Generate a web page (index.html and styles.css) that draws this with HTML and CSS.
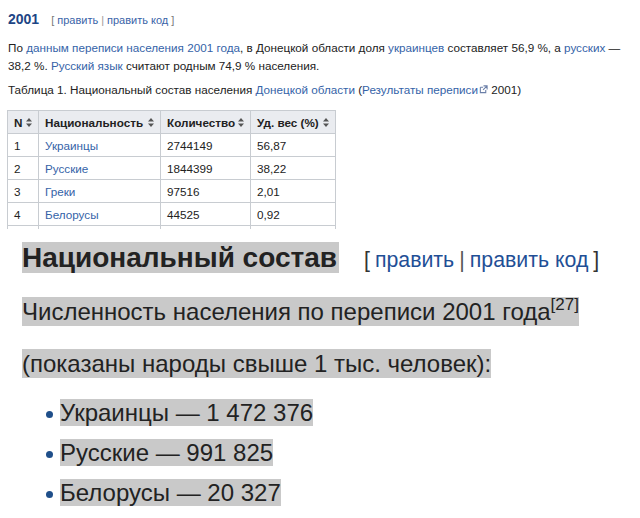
FILE: index.html
```html
<!DOCTYPE html>
<html lang="ru">
<head>
<meta charset="utf-8">
<link rel="stylesheet" href="styles.css">
</head>
<body>
<div class="top">
  <h3 class="year">2001<span class="edit"><span class="br">[</span><a href="#">править</a><span class="sep">|</span><a href="#">править код</a><span class="br">]</span></span></h3>
  <p class="para">По <a href="#">данным переписи населения 2001 года</a>, в Донецкой области доля <a href="#">украинцев</a> составляет 56,9 %, а <a href="#">русских</a> — 38,2 %. <a href="#">Русский язык</a> считают родным 74,9 % населения.</p>
  <p class="caption">Таблица 1. Национальный состав населения <a href="#">Донецкой области</a> (<a href="#">Результаты переписи</a><svg class="ext" width="9" height="9" viewBox="0 0 10 10"><path d="M1.5 2.5h3M1.5 2.5v6h6v-3" fill="none" stroke="#6b7fa8" stroke-width="1.2"/><path d="M5 1h4v4M9 1L4.5 5.5" fill="none" stroke="#6b7fa8" stroke-width="1.2"/></svg> 2001)</p>
  <table class="nat">
    <colgroup>
      <col class="c1"><col class="c2"><col class="c3"><col class="c4">
    </colgroup>
    <thead>
      <tr>
        <th><span class="hd">N<svg class="sort" width="6" height="9" viewBox="0 0 6 9"><path d="M3 0L6 3.5H0z M3 9L0 5.5h6z" fill="#555"/></svg></span></th>
        <th><span class="hd">Национальность<svg class="sort" width="6" height="9" viewBox="0 0 6 9"><path d="M3 0L6 3.5H0z M3 9L0 5.5h6z" fill="#555"/></svg></span></th>
        <th><span class="hd">Количество<svg class="sort" width="6" height="9" viewBox="0 0 6 9"><path d="M3 0L6 3.5H0z M3 9L0 5.5h6z" fill="#555"/></svg></span></th>
        <th><span class="hd">Уд. вес (%)<svg class="sort" width="6" height="9" viewBox="0 0 6 9"><path d="M3 0L6 3.5H0z M3 9L0 5.5h6z" fill="#555"/></svg></span></th>
      </tr>
    </thead>
    <tbody>
      <tr><td>1</td><td><a href="#">Украинцы</a></td><td>2744149</td><td>56,87</td></tr>
      <tr><td>2</td><td><a href="#">Русские</a></td><td>1844399</td><td>38,22</td></tr>
      <tr><td>3</td><td><a href="#">Греки</a></td><td>97516</td><td>2,01</td></tr>
      <tr><td>4</td><td><a href="#">Белорусы</a></td><td>44525</td><td>0,92</td></tr>
      <tr class="stub"><td></td><td></td><td></td><td></td></tr>
    </tbody>
  </table>
</div>
<div class="bottom">
  <h2 class="sec"><span class="hl">Национальный состав</span><span class="edit2"><span class="br2">[</span><a href="#">править</a><span class="sep2">|</span><a href="#">править код</a><span class="br2">]</span></span></h2>
  <p class="line"><span class="hl">Численность населения по переписи 2001 года<sup>[27]</sup></span></p>
  <p class="line"><span class="hl">(показаны народы свыше 1 тыс. человек):</span></p>
  <ul class="list">
    <li><span class="hl">Украинцы — 1 472 376</span></li>
    <li><span class="hl">Русские — 991 825</span></li>
    <li><span class="hl">Белорусы — 20 327</span></li>
  </ul>
</div>
</body>
</html>
```
FILE: styles.css
```css
html, body {
  margin: 0;
  padding: 0;
  background: #fff;
}
body {
  font-family: "Liberation Sans", Arial, sans-serif;
  color: #222;
}
a {
  color: #3563a8;
  text-decoration: none;
}
.top {
  height: 229px;
  overflow: hidden;
  padding-left: 8px;
}
.year {
  margin: 0;
  padding-top: 9px;
  font-size: 14px;
  line-height: 20px;
  font-weight: bold;
  color: #1d4585;
}
.edit {
  font-size: 11px;
  font-weight: normal;
  margin-left: 12px;
  color: #666;
}
.edit .br { color: #777; }
.edit .sep { margin: 0 3px; color: #999; }
.edit a { color: #3a64a8; }
.edit .br:first-child { margin-right: 3px; }
.edit .br:last-child { margin-left: 3px; }
.para {
  margin: 9px 0 0;
  font-size: 11.7px;
  line-height: 18px;
  color: #222;
  width: 625px;
}
.caption {
  margin: 6px 0 0;
  font-size: 11.7px;
  line-height: 18px;
  color: #222;
}
.ext { margin-left: 1px; vertical-align: 0; }
.nat {
  margin-top: 11px;
  margin-left: -1px;
  border-collapse: collapse;
  table-layout: fixed;
  width: 328px;
  font-size: 11.7px;
  color: #222;
}
.c1 { width: 31px; }
.c2 { width: 122px; }
.c3 { width: 90px; }
.c4 { width: 85px; }
.nat th, .nat td {
  border: 1px solid #c8ccd1;
  padding: 0 6px;
  height: 22px;
  text-align: left;
  white-space: nowrap;
}
.nat th {
  background: #eaecf0;
  font-weight: bold;
}
.hd {
  display: flex;
  justify-content: space-between;
  align-items: center;
}
.sort { flex: none; }
.nat tr.stub td {
  height: 3px;
  padding: 0;
  border-bottom: none;
}
.bottom {
  padding-left: 22px;
  padding-top: 13px;
  color: #222;
}
.hl {
  background: #c9c9c9;
}
.sec {
  margin: 0;
  font-size: 28px;
  line-height: 32px;
  font-weight: bold;
  color: #222;
}
.sec .hl { padding-right: 2px; }
.edit2 {
  font-size: 21.3px;
  font-weight: normal;
  margin-left: 25px;
  color: #333;
}
.edit2 a { color: #1f4f96; }
.br2:first-child { margin-right: 5px; }
.br2:last-child { margin-left: 5px; }
.sep2 { margin: 0 5px; color: #555; }
.line {
  margin: 20px 0 0;
  font-size: 24px;
  line-height: 32px;
}
.line .hl { padding: 1px 0; }
.line sup {
  font-size: 17px;
  line-height: 0;
  vertical-align: 10px;
}
.list {
  margin: 20px 0 0;
  padding-left: 38px;
  list-style: none;
}
.list li {
  font-size: 24px;
  line-height: 26px;
  margin-bottom: 14px;
  position: relative;
}
.list li::before {
  content: "";
  position: absolute;
  left: -14px;
  top: 11px;
  width: 7px;
  height: 7px;
  border-radius: 50%;
  background: #1f4f8a;
}
```
